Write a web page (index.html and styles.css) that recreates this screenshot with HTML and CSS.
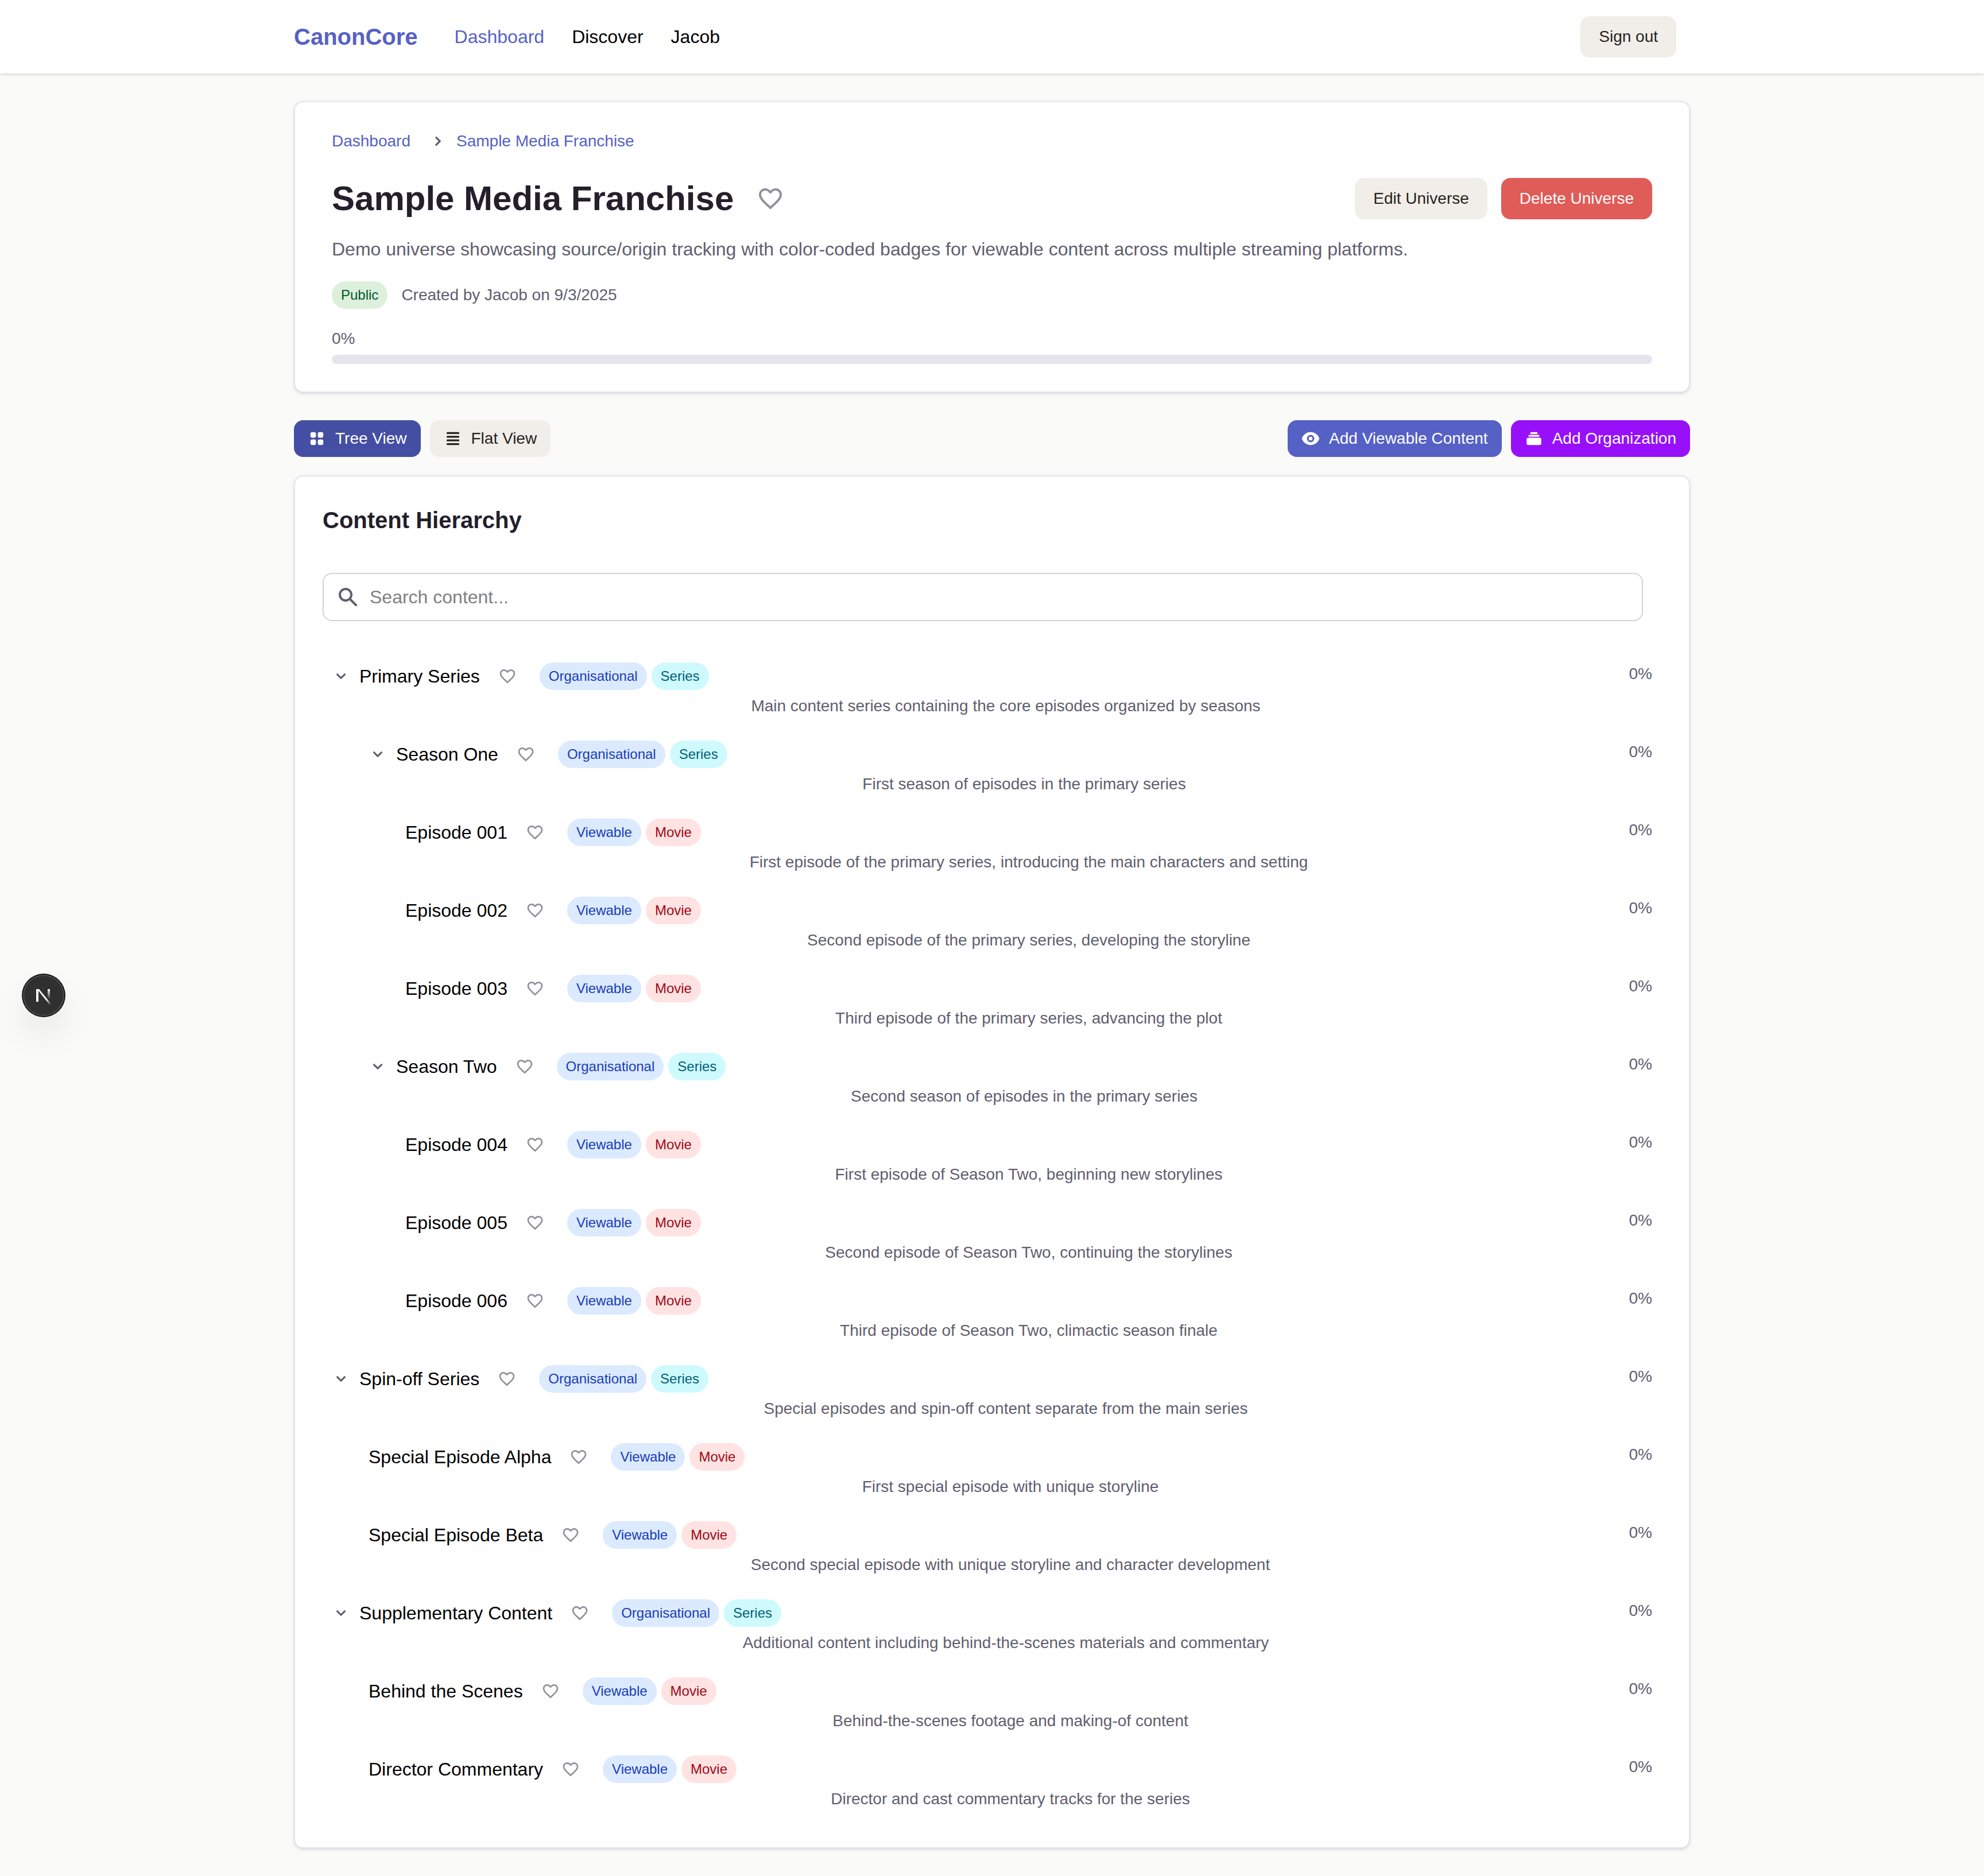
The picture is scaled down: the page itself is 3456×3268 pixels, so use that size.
FILE: index.html
```html
<!DOCTYPE html>
<html lang="en">
<head>
<meta charset="utf-8">
<meta name="viewport" content="width=device-width, initial-scale=1">
<title>Sample Media Franchise - CanonCore</title>
<link rel="stylesheet" href="styles.css">
</head>
<body>
<svg class="sprite" aria-hidden="true">
  <symbol id="heart" viewBox="0 0 24 24"><path d="M16.5 3c-1.74 0-3.41.81-4.5 2.09C10.91 3.81 9.24 3 7.5 3 4.42 3 2 5.42 2 8.5c0 3.78 3.4 6.86 8.55 11.54L12 21.35l1.45-1.32C18.6 15.36 22 12.28 22 8.5 22 5.42 19.58 3 16.5 3zm-4.4 15.55l-.1.1-.1-.1C7.14 14.24 4 11.39 4 8.5 4 6.5 5.5 5 7.5 5c1.54 0 3.04.99 3.57 2.36h1.87C13.46 5.99 14.96 5 16.5 5c2 0 3.5 1.5 3.5 3.5 0 2.89-3.14 5.74-7.9 10.05z"/></symbol>
  <symbol id="chevron-down" viewBox="0 0 20 20"><path fill-rule="evenodd" d="M5.293 7.293a1 1 0 011.414 0L10 10.586l3.293-3.293a1 1 0 111.414 1.414l-4 4a1 1 0 01-1.414 0l-4-4a1 1 0 010-1.414z"/></symbol>
  <symbol id="chevron-right" viewBox="0 0 20 20"><path fill-rule="evenodd" d="M7.293 14.707a1 1 0 010-1.414L10.586 10 7.293 6.707a1 1 0 011.414-1.414l4 4a1 1 0 010 1.414l-4 4a1 1 0 01-1.414 0z"/></symbol>
  <symbol id="grid" viewBox="0 0 20 20"><path d="M5 3a2 2 0 00-2 2v2a2 2 0 002 2h2a2 2 0 002-2V5a2 2 0 00-2-2H5zM5 11a2 2 0 00-2 2v2a2 2 0 002 2h2a2 2 0 002-2v-2a2 2 0 00-2-2H5zM11 5a2 2 0 012-2h2a2 2 0 012 2v2a2 2 0 01-2 2h-2a2 2 0 01-2-2V5zM11 13a2 2 0 012-2h2a2 2 0 012 2v2a2 2 0 01-2 2h-2a2 2 0 01-2-2v-2z"/></symbol>
  <symbol id="list" viewBox="0 0 20 20"><path d="M3 4a1 1 0 011-1h12a1 1 0 110 2H4a1 1 0 01-1-1zm0 4a1 1 0 011-1h12a1 1 0 110 2H4a1 1 0 01-1-1zm0 4a1 1 0 011-1h12a1 1 0 110 2H4a1 1 0 01-1-1zm0 4a1 1 0 011-1h12a1 1 0 110 2H4a1 1 0 01-1-1z"/></symbol>
  <symbol id="eye" viewBox="0 0 20 20"><path d="M10 12a2 2 0 100-4 2 2 0 000 4z"/><path fill-rule="evenodd" d="M.458 10C1.732 5.943 5.522 3 10 3s8.268 2.943 9.542 7c-1.274 4.057-5.064 7-9.542 7S1.732 14.057.458 10zM14 10a4 4 0 11-8 0 4 4 0 018 0z"/></symbol>
  <symbol id="collection" viewBox="0 0 20 20"><path d="M7 3a1 1 0 000 2h6a1 1 0 100-2H7zM4 7a1 1 0 011-1h10a1 1 0 110 2H5a1 1 0 01-1-1zM2 11a2 2 0 012-2h12a2 2 0 012 2v4a2 2 0 01-2 2H4a2 2 0 01-2-2v-4z"/></symbol>
  <symbol id="search" viewBox="0 0 20 20"><path fill-rule="evenodd" d="M8 4a4 4 0 100 8 4 4 0 000-8zM2 8a6 6 0 1110.89 3.476l4.817 4.817a1 1 0 01-1.414 1.414l-4.816-4.816A6 6 0 012 8z"/></symbol>
</svg>

<header class="topbar">
  <div class="container topbar-inner">
    <a class="brand" href="#">CanonCore</a>
    <nav class="nav" aria-label="Main">
      <a class="active" href="#">Dashboard</a>
      <a href="#">Discover</a>
      <a href="#">Jacob</a>
    </nav>
    <button class="btn btn-muted" type="button">Sign out</button>
  </div>
</header>

<main class="container main">
  <section class="card summary">
    <nav class="breadcrumb" aria-label="Breadcrumb">
      <a href="#">Dashboard</a>
      <svg class="icon" aria-hidden="true"><use href="#chevron-right"/></svg>
      <a href="#">Sample Media Franchise</a>
    </nav>
    <div class="title-row">
      <h1>Sample Media Franchise</h1>
      <button class="like like-large" type="button" aria-label="Add to favourites"><svg aria-hidden="true"><use href="#heart"/></svg></button>
      <div class="actions">
        <button class="btn btn-muted" type="button">Edit Universe</button>
        <button class="btn btn-danger" type="button">Delete Universe</button>
      </div>
    </div>
    <p class="lead">Demo universe showcasing source/origin tracking with color-coded badges for viewable content across multiple streaming platforms.</p>
    <div class="meta">
      <span class="badge green">Public</span>
      <span>Created by Jacob on 9/3/2025</span>
    </div>
    <label class="progress-label" for="progress">0%</label>
    <progress class="progress" id="progress" value="0" max="100"></progress>
  </section>

  <div class="toolbar">
    <button class="tool tool-active" type="button"><svg class="icon" aria-hidden="true"><use href="#grid"/></svg>Tree View</button>
    <button class="tool tool-muted" type="button"><svg class="icon" aria-hidden="true"><use href="#list"/></svg>Flat View</button>
    <span class="spacer"></span>
    <button class="tool tool-primary" type="button"><svg class="icon" aria-hidden="true"><use href="#eye"/></svg>Add Viewable Content</button>
    <button class="tool tool-purple" type="button"><svg class="icon" aria-hidden="true"><use href="#collection"/></svg>Add Organization</button>
  </div>

  <section class="card hierarchy">
    <h2>Content Hierarchy</h2>
    <div class="search">
      <svg class="search-icon" aria-hidden="true"><use href="#search"/></svg>
      <input type="text" placeholder="Search content..." aria-label="Search content">
    </div>

    <ul class="tree">
      <li>
        <div class="row">
          <button class="toggle" type="button" aria-label="Collapse"><svg class="icon" aria-hidden="true"><use href="#chevron-down"/></svg></button>
          <div class="body">
            <div class="line"><a href="#">Primary Series</a><button class="like" type="button" aria-label="Add to favourites"><svg aria-hidden="true"><use href="#heart"/></svg></button><span class="badges"><span class="badge blue">Organisational</span><span class="badge cyan">Series</span></span><span class="percent">0%</span></div>
            <p>Main content series containing the core episodes organized by seasons</p>
          </div>
        </div>
        <ul>
          <li>
            <div class="row">
              <button class="toggle" type="button" aria-label="Collapse"><svg class="icon" aria-hidden="true"><use href="#chevron-down"/></svg></button>
              <div class="body">
                <div class="line"><a href="#">Season One</a><button class="like" type="button" aria-label="Add to favourites"><svg aria-hidden="true"><use href="#heart"/></svg></button><span class="badges"><span class="badge blue">Organisational</span><span class="badge cyan">Series</span></span><span class="percent">0%</span></div>
                <p>First season of episodes in the primary series</p>
              </div>
            </div>
            <ul>
              <li>
                <div class="row"><div class="body">
                  <div class="line"><a href="#">Episode 001</a><button class="like" type="button" aria-label="Add to favourites"><svg aria-hidden="true"><use href="#heart"/></svg></button><span class="badges"><span class="badge blue">Viewable</span><span class="badge red">Movie</span></span><span class="percent">0%</span></div>
                  <p>First episode of the primary series, introducing the main characters and setting</p>
                </div></div>
              </li>
              <li>
                <div class="row"><div class="body">
                  <div class="line"><a href="#">Episode 002</a><button class="like" type="button" aria-label="Add to favourites"><svg aria-hidden="true"><use href="#heart"/></svg></button><span class="badges"><span class="badge blue">Viewable</span><span class="badge red">Movie</span></span><span class="percent">0%</span></div>
                  <p>Second episode of the primary series, developing the storyline</p>
                </div></div>
              </li>
              <li>
                <div class="row"><div class="body">
                  <div class="line"><a href="#">Episode 003</a><button class="like" type="button" aria-label="Add to favourites"><svg aria-hidden="true"><use href="#heart"/></svg></button><span class="badges"><span class="badge blue">Viewable</span><span class="badge red">Movie</span></span><span class="percent">0%</span></div>
                  <p>Third episode of the primary series, advancing the plot</p>
                </div></div>
              </li>
            </ul>
          </li>
          <li>
            <div class="row">
              <button class="toggle" type="button" aria-label="Collapse"><svg class="icon" aria-hidden="true"><use href="#chevron-down"/></svg></button>
              <div class="body">
                <div class="line"><a href="#">Season Two</a><button class="like" type="button" aria-label="Add to favourites"><svg aria-hidden="true"><use href="#heart"/></svg></button><span class="badges"><span class="badge blue">Organisational</span><span class="badge cyan">Series</span></span><span class="percent">0%</span></div>
                <p>Second season of episodes in the primary series</p>
              </div>
            </div>
            <ul>
              <li>
                <div class="row"><div class="body">
                  <div class="line"><a href="#">Episode 004</a><button class="like" type="button" aria-label="Add to favourites"><svg aria-hidden="true"><use href="#heart"/></svg></button><span class="badges"><span class="badge blue">Viewable</span><span class="badge red">Movie</span></span><span class="percent">0%</span></div>
                  <p>First episode of Season Two, beginning new storylines</p>
                </div></div>
              </li>
              <li>
                <div class="row"><div class="body">
                  <div class="line"><a href="#">Episode 005</a><button class="like" type="button" aria-label="Add to favourites"><svg aria-hidden="true"><use href="#heart"/></svg></button><span class="badges"><span class="badge blue">Viewable</span><span class="badge red">Movie</span></span><span class="percent">0%</span></div>
                  <p>Second episode of Season Two, continuing the storylines</p>
                </div></div>
              </li>
              <li>
                <div class="row"><div class="body">
                  <div class="line"><a href="#">Episode 006</a><button class="like" type="button" aria-label="Add to favourites"><svg aria-hidden="true"><use href="#heart"/></svg></button><span class="badges"><span class="badge blue">Viewable</span><span class="badge red">Movie</span></span><span class="percent">0%</span></div>
                  <p>Third episode of Season Two, climactic season finale</p>
                </div></div>
              </li>
            </ul>
          </li>
        </ul>
      </li>
      <li>
        <div class="row">
          <button class="toggle" type="button" aria-label="Collapse"><svg class="icon" aria-hidden="true"><use href="#chevron-down"/></svg></button>
          <div class="body">
            <div class="line"><a href="#">Spin-off Series</a><button class="like" type="button" aria-label="Add to favourites"><svg aria-hidden="true"><use href="#heart"/></svg></button><span class="badges"><span class="badge blue">Organisational</span><span class="badge cyan">Series</span></span><span class="percent">0%</span></div>
            <p>Special episodes and spin-off content separate from the main series</p>
          </div>
        </div>
        <ul>
          <li>
            <div class="row"><div class="body">
              <div class="line"><a href="#">Special Episode Alpha</a><button class="like" type="button" aria-label="Add to favourites"><svg aria-hidden="true"><use href="#heart"/></svg></button><span class="badges"><span class="badge blue">Viewable</span><span class="badge red">Movie</span></span><span class="percent">0%</span></div>
              <p>First special episode with unique storyline</p>
            </div></div>
          </li>
          <li>
            <div class="row"><div class="body">
              <div class="line"><a href="#">Special Episode Beta</a><button class="like" type="button" aria-label="Add to favourites"><svg aria-hidden="true"><use href="#heart"/></svg></button><span class="badges"><span class="badge blue">Viewable</span><span class="badge red">Movie</span></span><span class="percent">0%</span></div>
              <p>Second special episode with unique storyline and character development</p>
            </div></div>
          </li>
        </ul>
      </li>
      <li>
        <div class="row">
          <button class="toggle" type="button" aria-label="Collapse"><svg class="icon" aria-hidden="true"><use href="#chevron-down"/></svg></button>
          <div class="body">
            <div class="line"><a href="#">Supplementary Content</a><button class="like" type="button" aria-label="Add to favourites"><svg aria-hidden="true"><use href="#heart"/></svg></button><span class="badges"><span class="badge blue">Organisational</span><span class="badge cyan">Series</span></span><span class="percent">0%</span></div>
            <p>Additional content including behind-the-scenes materials and commentary</p>
          </div>
        </div>
        <ul>
          <li>
            <div class="row"><div class="body">
              <div class="line"><a href="#">Behind the Scenes</a><button class="like" type="button" aria-label="Add to favourites"><svg aria-hidden="true"><use href="#heart"/></svg></button><span class="badges"><span class="badge blue">Viewable</span><span class="badge red">Movie</span></span><span class="percent">0%</span></div>
              <p>Behind-the-scenes footage and making-of content</p>
            </div></div>
          </li>
          <li>
            <div class="row"><div class="body">
              <div class="line"><a href="#">Director Commentary</a><button class="like" type="button" aria-label="Add to favourites"><svg aria-hidden="true"><use href="#heart"/></svg></button><span class="badges"><span class="badge blue">Viewable</span><span class="badge red">Movie</span></span><span class="percent">0%</span></div>
              <p>Director and cast commentary tracks for the series</p>
            </div></div>
          </li>
        </ul>
      </li>
    </ul>
  </section>
</main>

<button class="dev-badge" type="button" aria-label="Open developer tools">
  <svg viewBox="0 0 72 72" aria-hidden="true">
    <defs>
      <linearGradient id="fade-diagonal" gradientUnits="userSpaceOnUse" x1="42" y1="42" x2="49" y2="52"><stop stop-color="#fff"/><stop offset="1" stop-color="#fff" stop-opacity="0"/></linearGradient>
      <linearGradient id="fade-stem" gradientUnits="userSpaceOnUse" x1="45" y1="25" x2="45" y2="42"><stop stop-color="#fff"/><stop offset="1" stop-color="#fff" stop-opacity="0"/></linearGradient>
    </defs>
    <path d="M23 25h5l22 27-3 1-20-25v19h-4z" fill="url(#fade-diagonal)"/>
    <path d="M43 25h4v17h-4z" fill="url(#fade-stem)"/>
  </svg>
</button>
</body>
</html>
```
FILE: styles.css
```css
* {
  box-sizing: border-box;
}

body {
  margin: 0;
  background: #fafaf8;
  color: #000;
  font-family: "Liberation Sans", Arial, sans-serif;
  font-size: 32px;
  line-height: 48px;
}

h1, h2, p, ul {
  margin: 0;
  padding: 0;
}

ul {
  list-style: none;
}

a {
  color: inherit;
  text-decoration: none;
}

button {
  border: 0;
  padding: 0;
  background: none;
  font: inherit;
  cursor: pointer;
}

svg {
  display: block;
  fill: currentColor;
}

.sprite {
  display: none;
}

.icon {
  width: 32px;
  height: 32px;
  flex: none;
}

.container {
  max-width: 2432px;
  margin: 0 auto;
}

/* Top bar */
.topbar {
  background: #fff;
  box-shadow: 0 2px 6px rgba(0, 0, 0, 0.1), 0 2px 4px -2px rgba(0, 0, 0, 0.1);
}

.topbar-inner {
  display: flex;
  align-items: center;
  min-height: 128px;
  padding-right: 24px;
}

.brand {
  color: #5661c5;
  font-size: 40px;
  font-weight: 700;
}

.nav {
  display: flex;
  flex: 1;
  gap: 48px;
  margin-left: 64px;
}

.nav .active {
  color: #5661c5;
}

.btn {
  padding: 16px 32px;
  border-radius: 16px;
  font-size: 28px;
  line-height: 40px;
}

.btn-muted,
.tool-muted {
  background: #f1eee9;
  color: #26231e;
}

.btn-danger {
  background: #e05c58;
  color: #fff;
}

/* Cards */
.main {
  padding: 48px 0;
}

.card {
  border: 2px solid #e4e3ee;
  border-radius: 16px;
  background: #fff;
  box-shadow: 0 2px 6px rgba(0, 0, 0, 0.1), 0 2px 4px -2px rgba(0, 0, 0, 0.1);
}

.summary {
  padding: 48px 64px;
  color: #605e6e;
  font-size: 28px;
  line-height: 40px;
}

.breadcrumb {
  display: flex;
  align-items: center;
  gap: 16px;
}

.breadcrumb a {
  color: #5661c5;
}

.breadcrumb .icon {
  margin-left: 16px;
}

.title-row {
  display: flex;
  align-items: center;
  min-height: 96px;
  margin: 32px 0 16px;
}

.title-row h1 {
  color: #231f2b;
  font-size: 60px;
  line-height: 72px;
}

.actions {
  display: flex;
  gap: 24px;
  margin-left: auto;
}

.lead {
  font-size: 32px;
  line-height: 48px;
}

.meta {
  display: flex;
  align-items: center;
  gap: 24px;
  margin: 32px 0;
}

.progress-label {
  display: block;
}

.progress {
  display: block;
  width: 100%;
  height: 16px;
  margin-top: 8px;
  border: 0;
  border-radius: 8px;
  background: #e4e3ee;
  overflow: hidden;
  appearance: none;
}

.progress::-webkit-progress-bar {
  background: #e4e3ee;
}

.progress::-webkit-progress-value {
  background: #5661c5;
}

.badge {
  padding: 8px 16px;
  border-radius: 24px;
  font-size: 24px;
  line-height: 32px;
}

.green {
  background: #dcf0dc;
  color: #01592c;
}

.blue {
  background: #dbeafe;
  color: #193cb8;
}

.cyan {
  background: #cefafe;
  color: #005f78;
}

.red {
  background: #ffe2e2;
  color: #9f0712;
}

.like {
  padding: 0 16px;
  color: #92909c;
}

.like svg {
  width: 32px;
  height: 32px;
}

.like-large {
  margin-left: 24px;
}

.like-large svg {
  width: 48px;
  height: 48px;
}

/* Toolbar */
.toolbar {
  display: flex;
  gap: 16px;
  margin: 48px 0 32px;
}

.spacer {
  flex: 1;
}

.tool {
  display: flex;
  align-items: center;
  gap: 16px;
  padding: 12px 24px;
  border-radius: 16px;
  color: #fff;
  font-size: 28px;
  line-height: 40px;
}

.tool-active {
  background: #444ea2;
}

.tool-muted {
  color: #26231e;
}

.tool-primary {
  background: #5661c5;
}

.tool-purple {
  background: #9810fa;
}

/* Content hierarchy */
.hierarchy {
  padding: 48px;
}

.hierarchy h2 {
  color: #231f2b;
  font-size: 40px;
  line-height: 56px;
}

.search {
  position: relative;
  margin: 64px 32px 56px 0;
}

.search input {
  display: block;
  width: 100%;
  padding: 16px 24px 16px 80px;
  border: 2px solid #d4d2e3;
  border-radius: 16px;
  background: #fff;
  color: #231f2b;
  font: inherit;
}

.search input::placeholder {
  color: #808080;
}

.search-icon {
  position: absolute;
  top: 22px;
  left: 24px;
  width: 40px;
  height: 40px;
  color: #605e6e;
}

.tree,
.tree ul,
.tree li {
  display: flex;
  flex-direction: column;
  gap: 8px;
}

.tree ul {
  padding-left: 64px;
}

.row {
  display: flex;
  align-items: flex-start;
  gap: 16px;
  padding: 16px;
}

.toggle {
  padding: 8px 0;
  color: #605e6e;
}

.body {
  flex: 1;
}

.line {
  display: flex;
  align-items: center;
}

.line .like {
  margin: 0 24px 0 16px;
}

.badges {
  display: flex;
  gap: 8px;
}

.percent {
  align-self: flex-start;
  margin-left: auto;
  color: #605e6e;
  font-size: 28px;
  line-height: 40px;
}

.body p {
  margin-top: 8px;
  color: #605e6e;
  font-size: 28px;
  line-height: 40px;
  text-align: center;
}

/* Floating developer button */
.dev-badge {
  position: fixed;
  top: 1698px;
  left: 40px;
  width: 72px;
  height: 72px;
  border-radius: 50%;
  background: #303030;
  box-shadow: 0 0 0 2px #171717, inset 0 0 0 2px rgba(255, 255, 255, 0.14), 0 32px 64px -16px rgba(0, 0, 0, 0.24);
}
```
